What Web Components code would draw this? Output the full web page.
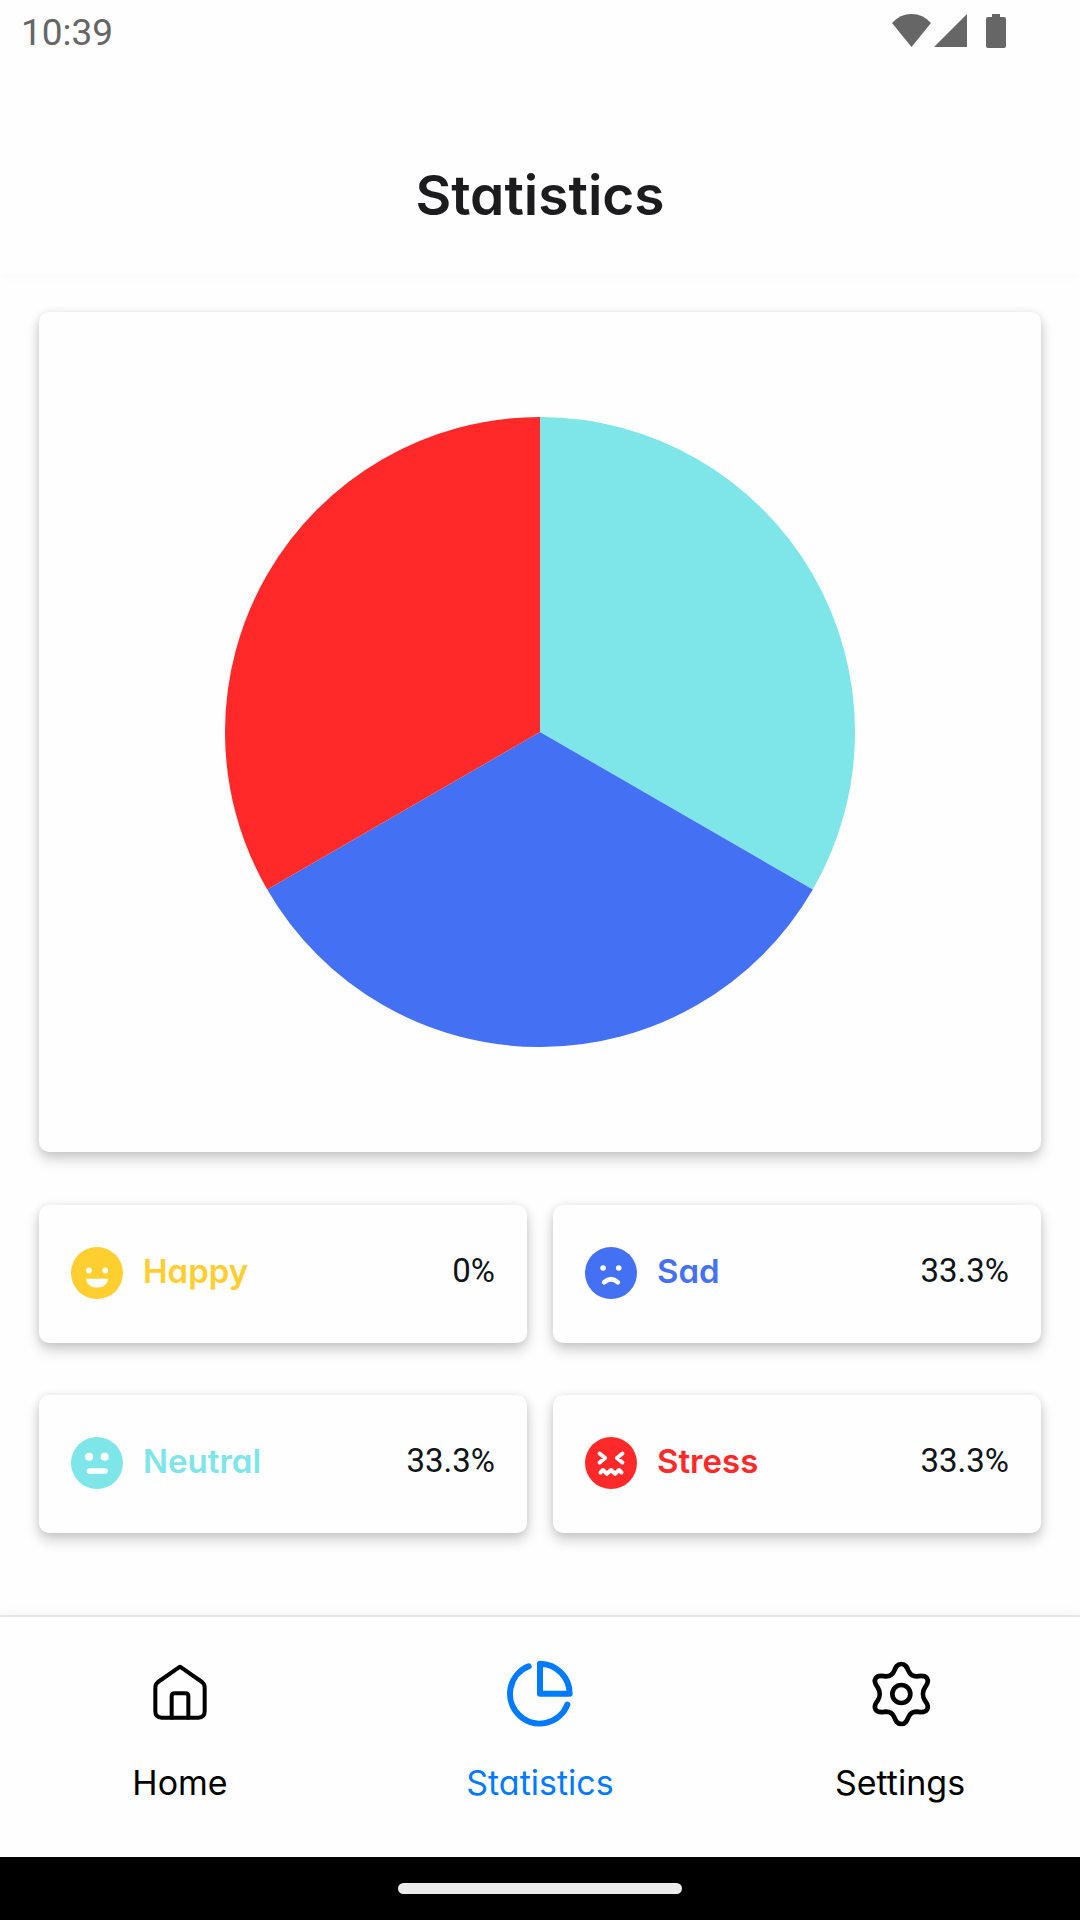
<!DOCTYPE html>
<html lang="en">
<head>
<meta charset="utf-8">
<meta name="viewport" content="width=device-width, initial-scale=1">
<title>Statistics</title>
<style>
  body {
    margin: 0;
    background: #fefefe;
    color: #000;
    font-family: Inter, "Open Sans", sans-serif;
    font-feature-settings: "cv11";
  }
</style>
</head>
<body>
<mood-app>
  <status-bar slot="top">10:39</status-bar>
  <page-header slot="top">Statistics</page-header>
  <pie-card></pie-card>
  <mood-grid>
    <mood-card mood="happy" value="0%">Happy</mood-card>
    <mood-card mood="sad" value="33.3%">Sad</mood-card>
    <mood-card mood="neutral" value="33.3%">Neutral</mood-card>
    <mood-card mood="stress" value="33.3%">Stress</mood-card>
  </mood-grid>
  <tab-bar slot="bottom">
    <tab-item icon="home">Home</tab-item>
    <tab-item icon="chart" active>Statistics</tab-item>
    <tab-item icon="gear">Settings</tab-item>
  </tab-bar>
  <gesture-bar slot="bottom"></gesture-bar>
</mood-app>

<script>
  const define = (name, render) => customElements.define(name, class extends HTMLElement {
    connectedCallback() {
      if (this.shadowRoot) return;
      this.attachShadow({ mode: 'open' }).innerHTML = render(this);
    }
  });

  const surface = `background: #fefefe; border-radius: 10px;
    box-shadow: 0 7px 14px rgba(0, 0, 0, .19), 0 1px 8px rgba(0, 0, 0, .09);`;

  define('mood-app', () => `
    <style>
      :host { display: flex; flex-direction: column; min-height: 100vh; }
      main { flex: 1; display: flex; flex-direction: column; gap: 53px; padding: 39px; }
    </style>
    <slot name="top"></slot>
    <main><slot></slot></main>
    <slot name="bottom"></slot>`);

  define('status-bar', () => `
    <style>
      :host { display: flex; align-items: center; justify-content: space-between;
        height: 66px; padding: 0 73px 0 21px; color: #666;
        font: 37px/66px Roboto, sans-serif; }
      .icons { display: flex; align-items: center; padding-bottom: 4px; }
      svg { display: block; fill: currentColor; }
      .battery { margin-left: 18px; }
    </style>
    <span><slot></slot></span>
    <div class="icons">
      <svg width="42" height="36" viewBox="0 0 42 36"><path d="M1 10Q9 1 20.500 1T40 10L20.500 34Z"/></svg>
      <svg width="34" height="36" viewBox="0 0 34 36"><path d="M34 1V34H1Z"/></svg>
      <svg class="battery" width="22" height="36" viewBox="0 0 22 36"><path d="M7 1h8v3h4a2 2 0 0 1 2 2v27a2 2 0 0 1-2 2H3a2 2 0 0 1-2-2V6a2 2 0 0 1 2-2h4Z"/></svg>
    </div>`);

  define('page-header', () => `
    <style>
      :host { display: block; padding: 90px 39px 39px; color: #1c1c1e;
        background: #fefefe; box-shadow: 0 7px 7px rgba(0, 0, 0, .012); text-align: center; }
      h1 { margin: 0; font-size: 55px; line-height: 78px; font-weight: 600; }
    </style>
    <h1><slot></slot></h1>`);

  define('pie-card', () => `
    <style>
      :host { display: flex; justify-content: center; padding: 105px; ${surface} }
      svg { display: block; width: 100%; max-width: 630px; }
    </style>
    <svg viewBox="0 0 630 630" role="img" aria-label="Mood distribution">
      <path fill="#7EE5E9" d="M315 315V0A315 315 0 0 1 587.800 472.500Z"/>
      <path fill="#4470F3" d="M315 315L587.800 472.500A315 315 0 0 1 42.200 472.500Z"/>
      <path fill="#FF2929" d="M315 315L42.200 472.500A315 315 0 0 1 315 0Z"/>
    </svg>`);

  define('mood-grid', () => `
    <style>
      :host { display: grid; grid-template-columns: 1fr 1fr; gap: 52px 26px; }
    </style>
    <slot></slot>`);

  // Facial features are drawn around the centre of the face.
  const moods = {
    happy: ['#FFCF2F', `<circle cx="-8" cy="-2.500" r="2.900" fill="#fff"/><circle cx="8.300" cy="-2.500" r="2.900" fill="#fff"/>
      <path fill="#fff" d="M-10.800 5.800H11C11 11 6.500 14.600 0 14.600S-10.800 11-10.800 5.800Z"/>`],
    sad: ['#4470F3', `<circle cx="-7.900" cy="-5" r="2.800" fill="#fff"/><circle cx="7.700" cy="-5" r="2.800" fill="#fff"/>
      <path d="M-6.800 9.200Q0 3.200 6.800 9.200" stroke-width="4.800"/>`],
    neutral: ['#7EE5E9', `<circle cx="-7.900" cy="-6.200" r="4" fill="#fff"/><circle cx="7.700" cy="-6.200" r="4" fill="#fff"/>
      <path d="M-7.500 8H8" stroke-width="5.600"/>`],
    stress: ['#FF2929', `<path stroke-width="4" d="M-11.400-9.500L-5.900-5L-11.400-.5M11.400-9.500L5.900-5L11.400-.5"/>
      <path stroke-width="4" d="M-10.500 9.500L-8 7L-4.100 10.800L0 7L4.100 10.800L8 7L10.500 9.500"/>`]
  };

  define('mood-card', el => {
    const [color, face] = moods[el.getAttribute('mood')];
    return `
    <style>
      :host { display: flex; align-items: center; gap: 20px; min-height: 138px;
        box-sizing: border-box; padding: 0 32px 2px; font-size: 33px; ${surface} }
      svg { display: block; width: 52px; height: 52px; fill: none; stroke: none; }
      svg path[stroke-width] { stroke: #fff; stroke-linecap: round; stroke-linejoin: round; }
      .name, .value { padding-bottom: 4px; line-height: 48px; }
      .name { flex: 1; font-weight: 600; color: ${color}; }
      .value { font-family: Roboto, sans-serif; color: #101418; }
    </style>
    <svg viewBox="-26 -26 52 52" aria-hidden="true"><circle r="26" fill="${color}"/>${face}</svg>
    <span class="name"><slot></slot></span>
    <span class="value">${el.getAttribute('value')}</span>`;
  });

  define('tab-bar', () => `
    <style>
      :host { display: block; background: #fefefe; border-top: 2px solid #e6e6e6;
        box-shadow: 0 -2px 10px rgba(0, 0, 0, .04); }
      nav { display: grid; grid-template-columns: repeat(3, 1fr); }
    </style>
    <nav><slot></slot></nav>`);

  const icons = {
    home: ['132 174 216 216', `<path stroke-width="12" d="M240 200L306 246Q314 252 314 262V334Q314 353 295 353H185Q166 353 166 334V262Q166 252 174 246Z"/>
      <path stroke-width="12" d="M215 353V289Q215 280 224 280H256Q265 280 265 289V353"/>`],
    chart: ['192 174 216 216', `<path stroke-width="18" d="M266 199A89 89 0 1 0 382 314"/>
      <path stroke-width="18" d="M300 191V281H389A90 90 0 0 0 300 191Z"/>`],
    gear: ['192 174 216 216', `<circle stroke-width="14" cx="304" cy="282" r="27"/>
      <path stroke-width="14" d="M304 192C317 192 321 202 325 212C330 224 338 229 350 229C361 228 374 224 381 235C388 246 381 254 375 262C367 274 367 290 375 302C381 310 388 318 381 329C374 340 361 336 350 335C338 335 330 340 325 352C321 362 317 372 304 372C291 372 287 362 283 352C278 340 270 335 258 335C247 336 234 340 227 329C220 318 227 310 233 302C241 290 241 274 233 262C227 254 220 246 227 235C234 224 247 228 258 229C270 229 278 224 283 212C287 202 291 192 304 192Z"/>`]
  };

  define('tab-item', el => {
    const [box, art] = icons[el.getAttribute('icon')];
    const active = el.hasAttribute('active');
    return `
    <style>
      a { display: flex; flex-direction: column; align-items: center; gap: 29px;
        padding: 41px 0 50px; color: ${active ? '#007AFF' : '#000'}; text-decoration: none;
        font-size: 34px; line-height: 48px; }
      :host { display: block; }
      svg { display: block; width: 72px; height: 72px; fill: none; stroke: currentColor;
        stroke-linecap: round; stroke-linejoin: round; }
    </style>
    <a href="#${el.getAttribute('icon')}"${active ? ' aria-current="page"' : ''}>
      <svg viewBox="${box}" aria-hidden="true">${art}</svg>
      <span><slot></slot></span>
    </a>`;
  });

  define('gesture-bar', () => `
    <style>
      :host { display: flex; align-items: center; justify-content: center;
        height: 63px; background: #000; }
      div { width: 284px; height: 11px; border-radius: 6px; background: #ebebeb; }
    </style>
    <div></div>`);
</script>
</body>
</html>
